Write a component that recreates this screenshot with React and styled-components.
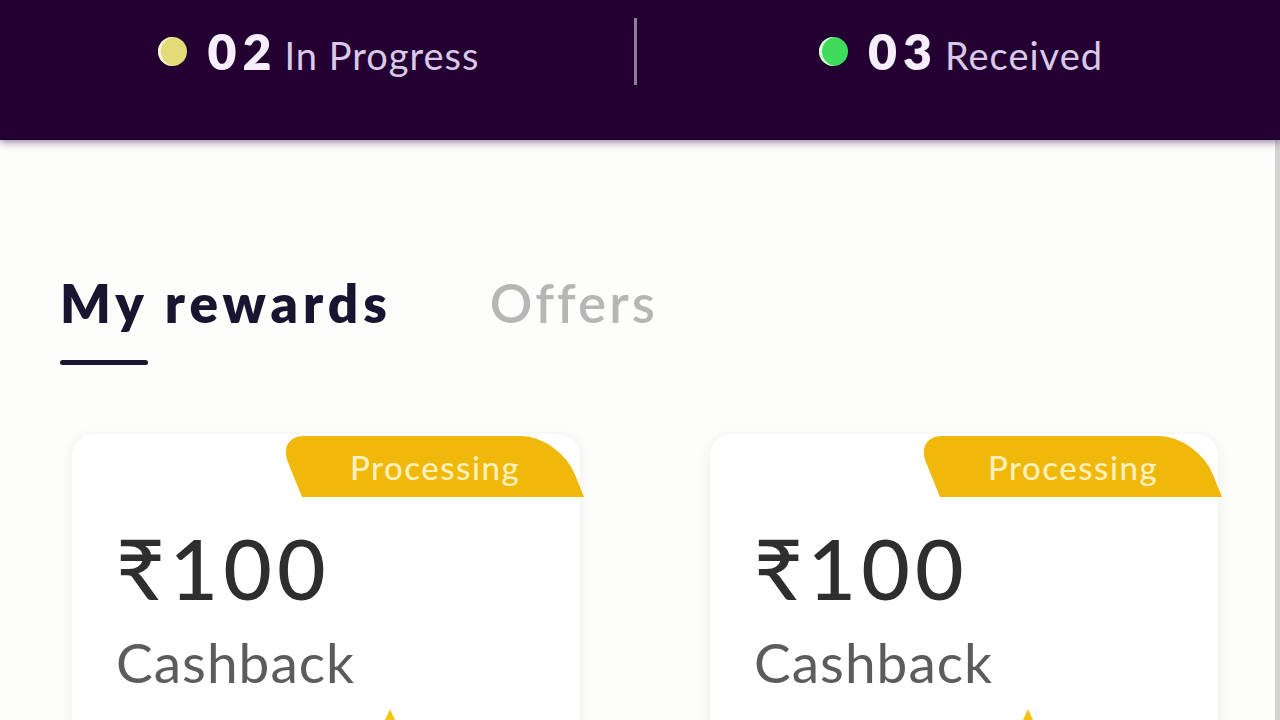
import styled, { createGlobalStyle } from "styled-components";

const GlobalStyle = createGlobalStyle`
  html, body {
    margin: 0;
    padding: 0;
    background-color: #fdfdfb;
    font-family: "Lato", "Open Sans", sans-serif;
    overflow: hidden;
  }
`;

const Page = styled.div`
  width: 1280px;
  height: 720px;
  overflow: hidden;
  background-color: #fdfdfb;
`;

const Header = styled.header`
  position: relative;
  z-index: 1;
  height: 140px;
  box-sizing: border-box;
  padding-top: 17px;
  display: grid;
  grid-template-columns: 1fr 4px 1fr;
  align-items: start;

  background-color: #240032;
  box-shadow: 0 3px 7px rgba(60, 20, 80, 0.45);
`;

const Stat = styled.div`
  display: flex;
  align-items: center;
  justify-content: center;
  height: 68px;
`;

const Dot = styled.span`
  width: 29px;
  height: 29px;
  margin-right: 20px;
  border-radius: 50%;

  background-color: ${({ color }) => color};
  box-shadow: 3px 0 0 ${({ rim }) => rim} inset;
`;

const StatNumber = styled.span`
  font-size: 50px;
  font-weight: 800;
  color: #f7eefc;
  letter-spacing: 6px;
`;

const StatLabel = styled.span`
  margin-left: 7px;
  margin-top: 8px;
  font-size: 38px;
  font-weight: 400;
  color: #d9c9e8;
  letter-spacing: 1px;
`;

const Divider = styled.span`
  width: 3px;
  height: 67px;
  margin-top: 1px;
  margin-left: -4px;
  background-color: #8f7d9e;
`;

const Main = styled.main`
  height: 580px;
  box-sizing: border-box;
  border-right: 5px solid #d2d2d2;
  padding-top: 133px;
`;

const Tabs = styled.nav`
  display: flex;
  gap: 98px;
  padding-left: 60px;
`;

const Tab = styled.div`
  display: flex;
  flex-direction: column;
`;

const TabLabel = styled.span`
  font-size: 53px;
  line-height: 60px;
  font-weight: ${({ active }) => (active ? 800 : 600)};
  color: ${({ active }) => (active ? "#191530" : "#b6b6b6")};
  letter-spacing: ${({ active }) => (active ? "5px" : "3px")};
`;

const Indicator = styled.span`
  width: 88px;
  height: 5px;
  margin-top: 27px;
  border-radius: 3px;
  background-color: ${({ active }) => (active ? "#1c1830" : "transparent")};
`;

const Cards = styled.section`
  display: flex;
  gap: 130px;
  padding-left: 72px;
  margin-top: 69px;
`;

const Card = styled.article`
  position: relative;
  width: 508px;
  height: 330px;
  box-sizing: border-box;
  padding: 86px 0 0 44px;

  background-color: #ffffff;
  border-radius: 22px;
  box-shadow: 0 2px 14px rgba(0, 0, 0, 0.07);
`;

const Badge = styled.div`
  position: absolute;
  top: 2px;
  right: -4px;
  width: 282px;
  height: 61px;
  display: flex;
  align-items: center;
  justify-content: center;

  background-color: #efb80a;
  border-radius: 26px 38px 0 0;
  transform: skewX(22deg);
  transform-origin: bottom right;
`;

const BadgeText = styled.span`
  transform: skewX(-22deg);
  margin-left: 8px;
  font-size: 33px;
  font-weight: 500;
  color: #fff0bc;
  letter-spacing: 1.5px;
`;

const Amount = styled.div`
  font-size: 84px;
  line-height: 96px;
  font-weight: 500;
  color: #2e2e2e;
  letter-spacing: 5px;
`;

const Label = styled.div`
  margin-top: 16px;
  font-size: 55px;
  line-height: 60px;
  font-weight: 400;
  color: #5c5c5c;
  letter-spacing: 1px;
`;

const StarWrap = styled.div`
  margin: 14px 0 0 254px;
  width: 40px;
  height: 40px;
`;

const Star = () => (
  <svg width="40" height="40" viewBox="0 0 24 24">
    <path
      d="M12 2l2.9 6.3 6.9.7-5.2 4.6 1.5 6.8L12 17l-6.1 3.4 1.5-6.8L2.2 9l6.9-.7z"
      fill="#f4c20d"
    />
  </svg>
);

const stats = [
  { count: "02", label: "In Progress", color: "#e3da78", rim: "#f5f0d8" },
  { count: "03", label: "Received", color: "#3fdc5c", rim: "#d9f7de" },
];

const rewards = [
  { id: 1, amount: "₹100", type: "Cashback", status: "Processing" },
  { id: 2, amount: "₹100", type: "Cashback", status: "Processing" },
];

const App = () => (
  <Page>
    <GlobalStyle />
    <Header>
      <Stat>
        <Dot color={stats[0].color} rim={stats[0].rim} />
        <StatNumber>{stats[0].count}</StatNumber>
        <StatLabel>{stats[0].label}</StatLabel>
      </Stat>
      <Divider />
      <Stat>
        <Dot color={stats[1].color} rim={stats[1].rim} />
        <StatNumber>{stats[1].count}</StatNumber>
        <StatLabel>{stats[1].label}</StatLabel>
      </Stat>
    </Header>
    <Main>
      <Tabs>
        <Tab>
          <TabLabel active>My rewards</TabLabel>
          <Indicator active />
        </Tab>
        <Tab>
          <TabLabel>Offers</TabLabel>
          <Indicator />
        </Tab>
      </Tabs>
      <Cards>
        {rewards.map((it) => (
          <Card key={`reward-${it.id}`}>
            <Badge>
              <BadgeText>{it.status}</BadgeText>
            </Badge>
            <Amount>{it.amount}</Amount>
            <Label>{it.type}</Label>
            <StarWrap>
              <Star />
            </StarWrap>
          </Card>
        ))}
      </Cards>
    </Main>
  </Page>
);

export default App;
